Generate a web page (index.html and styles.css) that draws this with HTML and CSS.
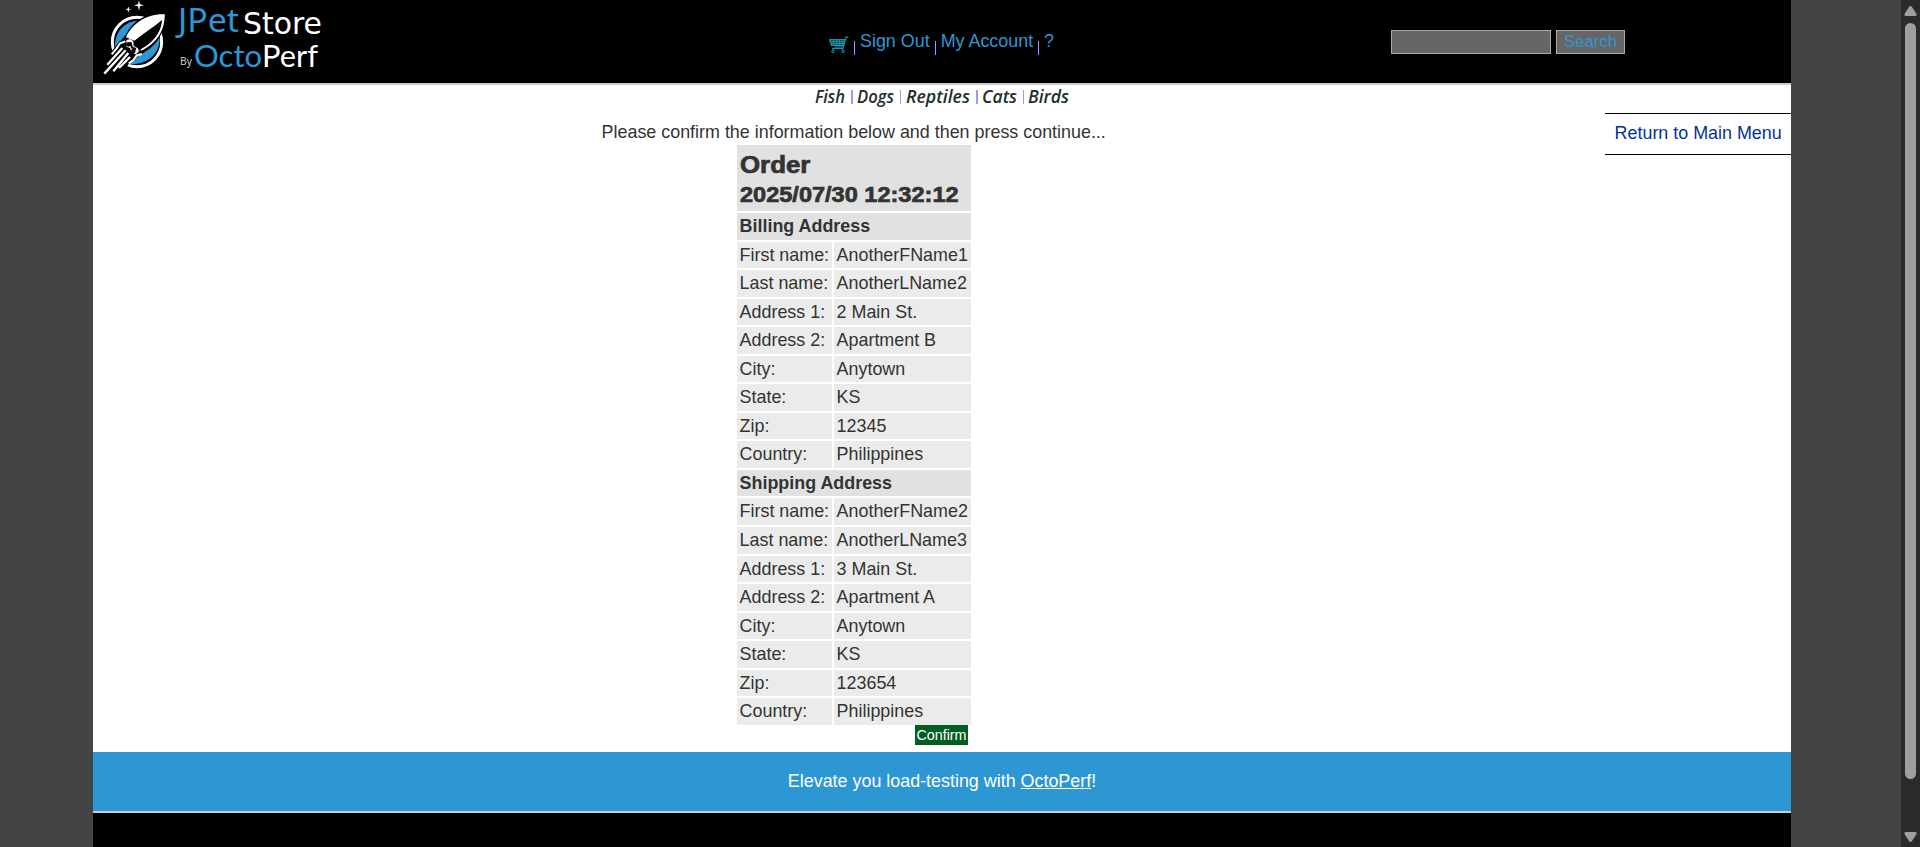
FILE: index.html
```html
<!DOCTYPE html>
<html lang="en">
<head>
<meta charset="utf-8">
<title>JPetStore Demo</title>
<link rel="stylesheet" href="styles.css">
</head>
<body>
<div class="window">
<div class="page">
  <header class="header">
    <svg class="logo" width="240" height="83" viewBox="93 0 240 83">
      <g transform="translate(100 0) scale(.3333)" stroke-linejoin="round">
        <circle cx="111" cy="126" r="74" fill="#000" stroke="#fff" stroke-width="9"/>
        <path d="M111 62C72 66 43 95 45 145L59 127L75 120L88 92Z" fill="#2d97d4"/>
        <path d="M179 114C181 158 143 197 88 192L104 183L115 166L130 160L160 128Z" fill="#2d97d4"/>
        <path d="M190 42C140 40 98 70 80 108L65 124L92 164L118 160C165 138 192 100 190 42Z" fill="#000" stroke="#000" stroke-width="8"/>
        <path d="M60 122L10 185L20 228L72 214L96 176Z" fill="#000"/>
        <path d="M35 163L50 145L60 130L76 124M86 190L100 181L110 166L126 162" stroke="#fff" stroke-width="6" fill="none"/>
        <path d="M67 144L22 194M77 151L13 221M85 159L40 214M90 171L57 204" stroke="#fff" stroke-width="7" fill="none"/>
        <path d="M192 43C140 41 96 71 78 112L104 122L107 156C162 140 194 98 192 43Z" fill="#fff"/>
        <path d="M186 60C158 84 126 102 100 125L106 156C151 138 184 103 186 60Z" fill="#000"/>
        <path d="M192 43C192 91 168 127 124 150" stroke="#fff" stroke-width="5" fill="none"/>
        <path d="M79 120L91 117L100 124L101 138L114 145L116 156L107 163L94 157L90 144L79 140Z" fill="#fff"/>
        <circle cx="85" cy="133" r="7" fill="#000"/><circle cx="100" cy="153" r="7" fill="#000"/><path d="M91 126L96 143L108 147" stroke="#000" stroke-width="6" fill="none"/>
        <path d="M117 1L120 13L132 16L120 19L117 32L114 19L102 16L114 13ZM85 19L87 26L94 28L87 30L85 38L83 30L76 28L83 26Z" fill="#fff"/>
      </g>
      <text class="logo-pet" x="178" y="32" textLength="61" lengthAdjust="spacingAndGlyphs">JPet</text>
      <text class="logo-store" x="243" y="34" textLength="79" lengthAdjust="spacingAndGlyphs">Store</text>
      <text class="logo-by" x="180" y="65" textLength="12" lengthAdjust="spacingAndGlyphs">By</text>
      <text class="logo-octo" x="194" y="67" textLength="68" lengthAdjust="spacingAndGlyphs">Octo</text>
      <text class="logo-perf" x="262" y="67" textLength="56" lengthAdjust="spacingAndGlyphs">Perf</text>
    </svg>
    <nav class="menu">
      <svg class="cart" width="20" height="18" viewBox="0 0 20 18" fill="none" stroke="#1993a8">
        <path d="M19.500 1H17L14 12.500H3M.5 3.500H16.500L14.500 9.500H2.500Z" stroke-width="1.200" fill="#0c4f5c"/>
        <path d="M2 5.500H15.500M2.500 7.500H15M4.500 3.500V9.500M7.500 3.500V9.500M10.500 3.500V9.500M13.500 3.500V9.500" stroke-width=".8"/>
        <path d="M5 12.500L3 15.500M13 12.500L15 15.500" stroke-width="1"/>
        <circle cx="4" cy="15.500" r="1.300"/><circle cx="14" cy="15.500" r="1.300"/>
      </svg>
      <i class="bar"></i><a>Sign Out</a><i class="bar"></i><a>My Account</a><i class="bar"></i><a>?</a>
    </nav>
    <form class="search"><input class="field" type="text"><button class="search-button" type="button">Search</button></form>
  </header>
  <nav class="quick">
    <svg width="260" height="24" viewBox="812 85 260 24">
      <g class="quick-text">
        <text x="815" y="102.500" textLength="30" lengthAdjust="spacingAndGlyphs">Fish</text>
        <text x="857" y="102.500" textLength="37" lengthAdjust="spacingAndGlyphs">Dogs</text>
        <text x="906" y="102.500" textLength="64" lengthAdjust="spacingAndGlyphs">Reptiles</text>
        <text x="982" y="102.500" textLength="35" lengthAdjust="spacingAndGlyphs">Cats</text>
        <text x="1028" y="102.500" textLength="41" lengthAdjust="spacingAndGlyphs">Birds</text>
      </g>
      <path d="M851 90h2v14h-2zM900 90h1v14h-1zM976 90h2v14h-2zM1023 90h1v14h-1z" fill="#9999ff"/>
    </svg>
  </nav>
  <main class="content">
    <section class="catalog">
      <p class="notice">Please confirm the information below and then press continue...</p>
      <table class="order">
        <colgroup><col class="labels"><col></colgroup>
        <tr class="title"><th colspan="2"><span class="order-word">Order</span><span class="order-date">2025/07/30 12:32:12</span></th></tr>
        <tr><th colspan="2">Billing Address</th></tr>
        <tr><td>First name:</td><td>AnotherFName1</td></tr>
        <tr><td>Last name:</td><td>AnotherLName2</td></tr>
        <tr><td>Address 1:</td><td>2 Main St.</td></tr>
        <tr><td>Address 2:</td><td>Apartment B</td></tr>
        <tr><td>City:</td><td>Anytown</td></tr>
        <tr><td>State:</td><td>KS</td></tr>
        <tr><td>Zip:</td><td>12345</td></tr>
        <tr><td>Country:</td><td>Philippines</td></tr>
        <tr><th colspan="2">Shipping Address</th></tr>
        <tr><td>First name:</td><td>AnotherFName2</td></tr>
        <tr><td>Last name:</td><td>AnotherLName3</td></tr>
        <tr><td>Address 1:</td><td>3 Main St.</td></tr>
        <tr><td>Address 2:</td><td>Apartment A</td></tr>
        <tr><td>City:</td><td>Anytown</td></tr>
        <tr><td>State:</td><td>KS</td></tr>
        <tr><td>Zip:</td><td>123654</td></tr>
        <tr><td>Country:</td><td>Philippines</td></tr>
      </table>
      <a class="confirm">Confirm</a>
    </section>
    <aside class="back"><a>Return to Main Menu</a></aside>
  </main>
  <div class="promo"><span>Elevate you load-testing with <a>OctoPerf</a>!</span></div>
  <footer class="footer"></footer>
</div>
<div class="scrollbar">
  <svg width="13" height="10" viewBox="0 0 13 10"><path d="M5 1Q6.500-1 8 1L12.500 8Q13 10 11 10H2Q0 10 .5 8Z" fill="#9f9f9f"/></svg>
  <div class="thumb"></div>
  <svg class="down" width="13" height="10" viewBox="0 0 13 10"><path d="M5 9Q6.500 11 8 9L12.500 2Q13 0 11 0H2Q0 0 .5 2Z" fill="#9f9f9f"/></svg>
</div>
</div>
</body>
</html>
```
FILE: styles.css
```css
* { box-sizing: border-box; }
body { margin: 0; background: #444; color: #333; font-family: "Liberation Sans", Arial, sans-serif; font-size: 17.9px; line-height: 22.56px; }
.window { display: flex; width: 1920px; height: 847px; overflow: hidden; }
.page { width: 1698px; margin-left: 93px; display: flex; flex-direction: column; background: #fff; }
.header { height: 85px; flex: none; background: #000; border-bottom: 2px solid #ccc; display: flex; color: #2d97d4; }
.logo { flex: none; }
.logo-pet, .logo-octo { fill: #2d97d4; }
.logo-store, .logo-perf, .logo-by { fill: #fff; }
.logo-pet { font: 32px "Noto Sans", sans-serif; }
.logo-store { font: 30px "DejaVu Sans", sans-serif; }
.logo-by { font: 10px "Noto Sans", sans-serif; fill: #ccc; }
.logo-octo, .logo-perf { font: 30px Lato, sans-serif; }
.menu { display: flex; padding: 30px 0 0 496px; width: 1057px; }
.cart { margin-top: 6px; }
.bar { width: 1px; height: 14px; margin: 11px 5px 0; background: #99f; }
.search { display: flex; gap: 5px; padding-top: 20px; height: 54px; margin: 10px 0 0 1px; }
.field { width: 160px; height: 24px; background: #666; border: 1px solid #aaa; padding: 0; }
.search-button { width: 69px; height: 24px; padding: 0; background: #666; border: 1px solid #aaa; color: #2d97d4; font: 16.8px/22px "Liberation Sans", Arial, sans-serif; }
.quick { height: 28px; flex: none; padding-left: 719px; }
.quick svg { display: block; }
.quick-text { font: italic 600 17.5px "Open Sans", sans-serif; fill: #1c3030; }
.content { height: 639px; flex: none; display: flex; }
.catalog { width: 1512px; display: flex; flex-direction: column; padding-top: 8px; }
.notice { margin: 0; height: 22px; line-height: 22px; padding-left: 508.6px; }
.order { border-spacing: 2px; width: 238px; table-layout: fixed; margin-left: 642px; font-size: inherit; }
.labels { width: 95px; }
.order th, .order td { padding: 2px 2px 2px 2.6px; height: 26.56px; line-height: 22.4px; text-align: left; vertical-align: top; background: #ebebeb; white-space: nowrap; }
.order th { background: #e1e1e1; }
.order .title th { height: 66px; padding: 5px 2px 1px 3px; -webkit-text-stroke: .7px #333; }
.order-word, .order-date { display: block; line-height: 30px; transform-origin: 0 50%; }
.order-word { font-size: 23.5px; transform: scaleX(1.1); }
.order-date { font-size: 21.6px; transform: scaleX(1.09); }
.confirm { width: 53px; height: 20px; margin: -2px 0 0 822px; background: #005e21; color: #fff; font-size: 14.3px; line-height: 21px; text-align: center; }
.back { width: 186px; height: 42px; border-top: 1px solid #000; border-bottom: 1px solid #000; color: #039; padding: 8px 9px 8px 9.6px; white-space: nowrap; }
.promo { height: 59px; flex: none; background: #2d97d4; color: #fff; display: flex; justify-content: center; align-items: center; }
.promo a { text-decoration: underline; }
.footer { flex: 1; background: #000; border-top: 2px solid #ccc; }
.scrollbar { width: 19px; margin-left: 110px; background: #2b2b2b; display: flex; flex-direction: column; align-items: center; padding: 6px 0 5px; }
.thumb { width: 11px; height: 756px; margin-top: 7px; border-radius: 6px; background: #9f9f9f; }
.down { margin-top: auto; }
```
